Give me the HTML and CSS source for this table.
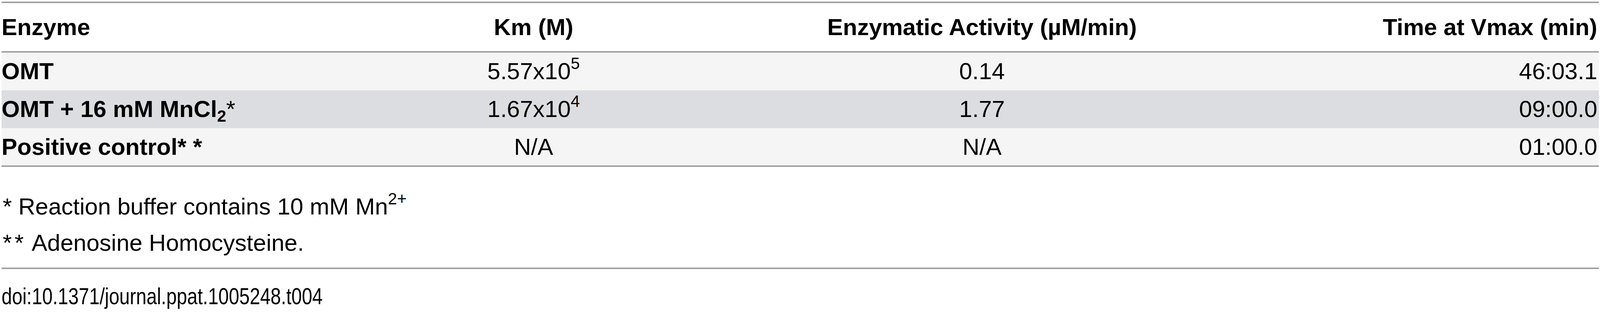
FILE: index.html
```html
<!DOCTYPE html>
<html lang="en">
<head>
<meta charset="utf-8">
<title>Table 4</title>
<link rel="stylesheet" href="styles.css">
</head>
<body>
<div class="page">
  <table class="data">
    <colgroup>
      <col class="c1"><col class="c2"><col class="c3"><col class="c4">
    </colgroup>
    <thead>
      <tr class="head">
        <th class="l">Enzyme</th>
        <th>Km (M)</th>
        <th>Enzymatic Activity (µM/min)</th>
        <th class="r">Time at Vmax (min)</th>
      </tr>
    </thead>
    <tbody>
      <tr class="row">
        <td class="name">OMT</td>
        <td>5.57x10<span class="sup">5</span></td>
        <td>0.14</td>
        <td class="r">46:03.1</td>
      </tr>
      <tr class="row shade">
        <td class="name">OMT + 16 mM MnCl<span class="sub">2</span><span class="mk">*</span></td>
        <td>1.67x10<span class="sup">4</span></td>
        <td>1.77</td>
        <td class="r">09:00.0</td>
      </tr>
      <tr class="row">
        <td class="name">Positive control* *</td>
        <td>N/A</td>
        <td>N/A</td>
        <td class="r">01:00.0</td>
      </tr>
    </tbody>
  </table>
  <div class="notes">
    <p>* Reaction buffer contains 10 mM Mn<span class="sup">2+</span></p>
    <p><span class="stars">**</span> Adenosine Homocysteine.</p>
  </div>
  <div class="doi"><span class="doi-text">doi:10.1371/journal.ppat.1005248.t004</span></div>
</div>
</body>
</html>
```

FILE: styles.css
```css
html, body {
  margin: 0;
  padding: 0;
  background: #ffffff;
  overflow: hidden;
}
body {
  font-family: "Liberation Sans", Arial, Helvetica, sans-serif;
  color: #000000;
}
.page {
  padding: 4px 3px 0 4px;
}
.data {
  width: 100%;
  table-layout: fixed;
  border-collapse: separate;
  border-spacing: 0;
  border-top: 4px solid #a2a2a2;
  border-bottom: 4px solid #a2a2a2;
  font-size: 60px;
}
.c1 { width: 15.505%; }
.c2 { width: 35.608%; }
.c3 { width: 20.543%; }
.c4 { width: 28.344%; }
.data th,
.data td {
  padding: 0 4px;
  line-height: 70px;
  white-space: nowrap;
  text-align: center;
  vertical-align: middle;
}
.data th {
  font-weight: bold;
  background: #ffffff;
  border-bottom: 4px solid #a2a2a2;
}
.head { height: 127px; }
.data .l,
.data .name {
  text-align: left;
  padding-left: 0;
}
.data .r {
  text-align: right;
  padding-right: 4px;
}
.data .name { font-weight: bold; }
.row {
  height: 96px;
  background: #f5f5f5;
}
.row.shade {
  height: 97px;
  background: #dcdde0;
}
.row + .row td {
  border-top: 1px solid #ebebeb;
}
.sup {
  font-size: 0.7em;
  vertical-align: 26px;
  line-height: 0;
  font-weight: normal;
}
.sub {
  font-size: 0.7em;
  vertical-align: -12px;
  line-height: 0;
}
.mk { font-weight: normal; }
.notes {
  margin-top: 55px;
  padding-left: 3px;
  font-size: 60px;
  line-height: 93px;
}
.notes p { margin: 0; }
.stars { letter-spacing: 7px; }
.doi {
  margin-top: 17px;
  border-top: 4px solid #a2a2a2;
  padding-top: 35px;
  font-size: 60px;
  line-height: 70px;
  white-space: nowrap;
}
.doi-text {
  display: inline-block;
  transform: scaleX(0.8);
  transform-origin: left center;
}
```
